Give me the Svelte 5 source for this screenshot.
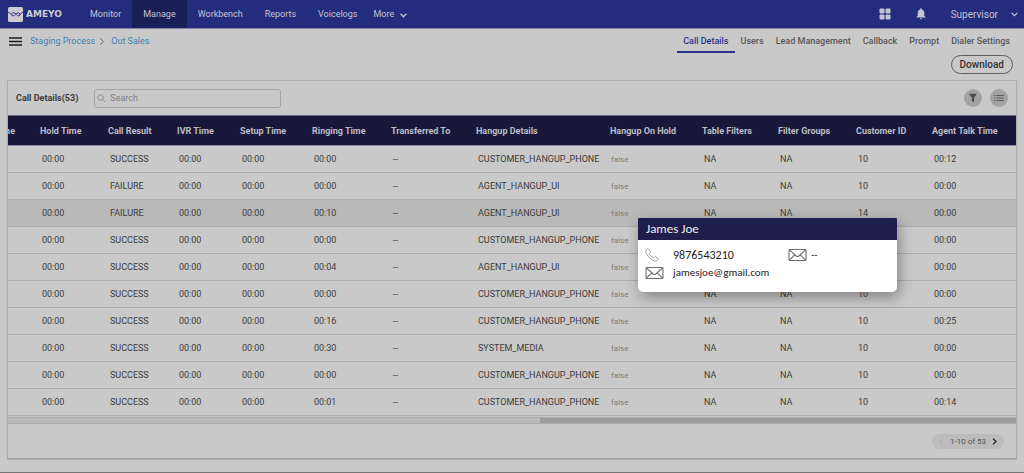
<script>
  let search = '';
  let activeTab = 'Call Details';

  const navItems = ['Monitor', 'Manage', 'Workbench', 'Reports', 'Voicelogs'];
  const tabs = ['Call Details', 'Users', 'Lead Management', 'Callback', 'Prompt', 'Dialer Settings'];

  const columns = [
    { label: 'Time', width: 24 },
    { label: 'Hold Time', width: 68 },
    { label: 'Call Result', width: 69 },
    { label: 'IVR Time', width: 63 },
    { label: 'Setup Time', width: 72 },
    { label: 'Ringing Time', width: 79 },
    { label: 'Transferred To', width: 85 },
    { label: 'Hangup Details', width: 134 },
    { label: 'Hangup On Hold', width: 92 },
    { label: 'Table Filters', width: 76 },
    { label: 'Filter Groups', width: 78 },
    { label: 'Customer ID', width: 76 },
    { label: 'Agent Talk Time', width: 92 }
  ];

  const calls = [
    { result: 'SUCCESS', ringing: '00:00', hangup: 'CUSTOMER_HANGUP_PHONE', customer: 10, talk: '00:12' },
    { result: 'FAILURE', ringing: '00:00', hangup: 'AGENT_HANGUP_UI', customer: 10, talk: '00:00' },
    { result: 'FAILURE', ringing: '00:10', hangup: 'AGENT_HANGUP_UI', customer: 14, talk: '00:00' },
    { result: 'SUCCESS', ringing: '00:00', hangup: 'CUSTOMER_HANGUP_PHONE', customer: 10, talk: '00:00' },
    { result: 'SUCCESS', ringing: '00:04', hangup: 'AGENT_HANGUP_UI', customer: 10, talk: '00:00' },
    { result: 'SUCCESS', ringing: '00:00', hangup: 'CUSTOMER_HANGUP_PHONE', customer: 10, talk: '00:00' },
    { result: 'SUCCESS', ringing: '00:16', hangup: 'CUSTOMER_HANGUP_PHONE', customer: 10, talk: '00:25' },
    { result: 'SUCCESS', ringing: '00:30', hangup: 'SYSTEM_MEDIA', customer: 10, talk: '00:00' },
    { result: 'SUCCESS', ringing: '00:00', hangup: 'CUSTOMER_HANGUP_PHONE', customer: 10, talk: '00:00' },
    { result: 'SUCCESS', ringing: '00:01', hangup: 'CUSTOMER_HANGUP_PHONE', customer: 10, talk: '00:14' }
  ];

  const selectedRow = 2;
</script>

{#snippet mail()}
  <svg class="mail" width="19" height="14" viewBox="0 0 19 14" fill="none" stroke="#6c6c6c" stroke-width="1.1" stroke-linejoin="round">
    <rect x="1" y="1.5" width="17" height="11" rx="0.8" />
    <path d="M1.4 1.9 8.2 8q1.3 1 2.6 0l6.8-6.1M1.4 12.1l5.4-5.3M17.6 12.1l-5.4-5.3" />
  </svg>
{/snippet}

<header class="topbar">
  <a class="logo" href="#home">
    <svg width="15" height="15" viewBox="0 0 15 15">
      <rect width="15" height="15" rx="1.5" fill="#cbcbd0" />
      <path d="M0 5.300C2.500 5.300 3.300 8.900 5.200 8.900 7.600 8.900 7.900 5.800 10.400 5.800c1.700 0 1.900 2.800.2 3C8.700 9 8.200 5.700 5.200 5.700c-1.800 0-2.100 2.800-.4 3.100M10.600 8.800c2 0 2-3.500 4.400-3.500" fill="none" stroke="#3a418a" stroke-width="1" />
    </svg>
    <span>AMEYO</span>
  </a>
  <nav>
    {#each navItems as item}
      <a href="#{item.toLowerCase()}" class:active={item === 'Manage'}>{item}</a>
    {/each}
    <button class="more">
      More
      <svg width="7" height="5" viewBox="0 0 7 5" fill="none" stroke="currentColor" stroke-width="1.4"><path d="M.6.8 3.500 3.700 6.400.8" /></svg>
    </button>
  </nav>
  <div class="account">
    <button aria-label="Apps">
      <svg width="12" height="12" viewBox="0 0 12 12" fill="currentColor">
        <rect x=".5" y=".5" width="5" height="5" rx="1" />
        <rect x="6.500" y=".5" width="5" height="5" rx="1" />
        <rect x=".5" y="6.500" width="5" height="5" rx="1" />
        <rect x="6.500" y="6.500" width="5" height="5" rx="1" />
      </svg>
    </button>
    <button aria-label="Notifications" class="bell">
      <svg width="10" height="12" viewBox="0 0 10 12" fill="currentColor">
        <path d="M5 .3c.5 0 .9.4.9.9v.3C7.500 1.900 8.300 3.200 8.300 4.800v3L9.500 9v.6h-9V9l1.200-1.200v-3c0-1.600.8-2.900 2.400-3.300v-.3c0-.5.4-.9.9-.9zM3.900 10.300h2.200a1.100 1.100 0 0 1-2.200 0z" />
      </svg>
    </button>
    <button class="user">
      <span>Supervisor</span>
      <svg width="7" height="5" viewBox="0 0 7 5" fill="none" stroke="currentColor" stroke-width="1.2"><path d="M.6.8 3.500 3.700 6.400.8" /></svg>
    </button>
  </div>
</header>

<main>
  <div class="subbar">
    <button class="menu" aria-label="Menu">
      <svg width="13" height="9" viewBox="0 0 13 9" stroke="#1c1c1c" stroke-width="1.600"><path d="M0 1h13M0 4.500h13M0 8h13" /></svg>
    </button>
    <a class="crumb" href="#staging">Staging Process</a>
    <svg class="sep" width="4" height="7" viewBox="0 0 4 7" fill="none" stroke="#666" stroke-width="1"><path d="M.5.5 3.300 3.500.5 6.500" /></svg>
    <a class="crumb" href="#out-sales">Out Sales</a>
    <div class="tabs">
      {#each tabs as tab}
        <button class:active={tab === activeTab} on:click={() => (activeTab = tab)}>{tab}</button>
      {/each}
    </div>
  </div>

  <div class="actions">
    <button class="download">Download</button>
  </div>

  <section class="panel">
    <div class="toolbar">
      <h1>Call Details(53)</h1>
      <label class="search">
        <svg width="9" height="9" viewBox="0 0 9 9" fill="none" stroke="#8c8c8c" stroke-width="1"><circle cx="3.500" cy="3.500" r="2.700" /><path d="m5.500 5.500 3 3" /></svg>
        <input type="text" placeholder="Search" aria-label="Search" bind:value={search} />
      </label>
      <div class="tools">
        <button aria-label="Filter">
          <svg width="10" height="10" viewBox="0 0 10 10" fill="#4c4c4c"><path d="M1 .8h8L6.100 4.800V9.300L3.900 8V4.800z" /></svg>
        </button>
        <button aria-label="Columns">
          <svg width="10" height="8" viewBox="0 0 10 8" stroke="#5c5c5c" stroke-width="1.100"><path d="M0 1.500h1.300M2.300 1.500H10M0 4h1.300M2.300 4H10M0 6.500h1.300M2.300 6.500H10" /></svg>
        </button>
      </div>
    </div>

    <div class="table-wrap">
      <table>
        <colgroup>
          {#each columns as col}
            <col style="width: {col.width}px" />
          {/each}
        </colgroup>
        <thead>
          <tr>
            {#each columns as col}
              <th><span>{col.label}</span></th>
            {/each}
          </tr>
        </thead>
        <tbody>
          {#each calls as call, i}
            <tr class:selected={i === selectedRow}>
              <td></td>
              <td>00:00</td>
              <td>{call.result}</td>
              <td>00:00</td>
              <td>00:00</td>
              <td>{call.ringing}</td>
              <td>--</td>
              <td>{call.hangup}</td>
              <td class="flag">false</td>
              <td>NA</td>
              <td>NA</td>
              <td>{call.customer}</td>
              <td>{call.talk}</td>
            </tr>
          {/each}
        </tbody>
      </table>
      <aside class="card">
        <h2>James Joe</h2>
        <div class="contact">
          <svg width="14" height="14" viewBox="0 0 14 14" fill="none" stroke="#8a8a8a" stroke-width="0.8" stroke-linejoin="round">
            <path d="M2.200.8.9 2.100C.2 3 .8 5.400 3.500 8.500s5.700 5 7.600 4.700l1.900-1.500c.4-.4.3-.8 0-1.100L10.700 8.900c-.4-.3-.8-.3-1.100 0l-1 .9C7.600 9.800 4.500 6.800 4.300 5.500l1-1c.4-.4.3-.8 0-1.100L3.500.9C3.100.4 2.600.4 2.200.8z" />
          </svg>
          <span>9876543210</span>
          {@render mail()}
          <span class="small">--</span>
          {@render mail()}
          <span class="small">jamesjoe@gmail.com</span>
        </div>
      </aside>
    </div>

    <div class="scroll-track"><div class="scroll-thumb"></div></div>

    <footer>
      <div class="pager">
        <button aria-label="Previous page" disabled>
          <svg width="5" height="7" viewBox="0 0 5 7" fill="none" stroke="#aaa" stroke-width="1"><path d="M4 .6 1 3.500 4 6.400" /></svg>
        </button>
        <span>1-10 of 53</span>
        <button aria-label="Next page">
          <svg width="5" height="7" viewBox="0 0 5 7" fill="none" stroke="#222" stroke-width="1.300"><path d="M1 .6 4 3.500 1 6.400" /></svg>
        </button>
      </div>
    </footer>
  </section>
</main>

<style>
  :global(body) {
    background: #c9c9c9;
    font-family: Roboto, 'Liberation Sans', sans-serif;
    font-size: 9px;
    color: #3c3c3c;
  }

  :global(#app) {
    box-sizing: border-box;
    min-height: 100vh;
    border-bottom: 1px solid #777;
  }

  button {
    padding: 0;
    border: 0;
    background: none;
    color: inherit;
    font: inherit;
    cursor: pointer;
  }

  a { color: inherit; text-decoration: none; }
  svg { display: block; flex: none; }

  .topbar {
    display: flex;
    height: 28px;
    background: #242c7d;
    border-bottom: 1px solid #8586ae;
    color: #c3c4d2;
  }

  .logo {
    display: flex;
    align-items: center;
    gap: 3px;
    width: 71px;
    padding-left: 8px;
    font-family: 'DejaVu Sans', sans-serif;
    font-size: 9px;
    font-weight: 700;
    color: #cbcbd0;
  }

  nav { display: flex; }

  nav a, .more {
    display: flex;
    align-items: center;
    padding: 0 11px;
  }

  nav a.active { background: #191e57; }
  .more { gap: 6px; padding: 0 5px; }
  .more svg { margin-top: 3px; }

  .account {
    display: flex;
    align-items: center;
    gap: 25px;
    margin-left: auto;
    padding-right: 6px;
  }

  .user {
    display: flex;
    align-items: center;
    gap: 13px;
    font-size: 10px;
  }

  main { padding: 0 7px; }

  .subbar {
    display: flex;
    align-items: center;
    height: 24px;
  }

  .menu { margin: 0 8px 0 2px; }
  .crumb { color: #4080b4; }
  .sep { margin: 0 7px 0 5px; }

  .tabs {
    display: flex;
    height: 24px;
    margin-left: auto;
    padding-right: 1px;
  }

  .tabs button {
    padding: 2px 6px 0;
    border-bottom: 2px solid transparent;
    font-weight: 500;
    color: #595959;
  }

  .tabs button.active {
    color: #2d328c;
    border-color: #2d328c;
  }

  .actions {
    display: flex;
    justify-content: flex-end;
    padding: 2px 4px 6px 0;
  }

  .download {
    height: 19px;
    padding: 0 8px;
    border: 1px solid #5f5f5f;
    border-radius: 10px;
    font-weight: 500;
    font-size: 10px;
    color: #333;
  }

  .panel {
    border: 1px solid #adadad;
    border-bottom-color: #9e9e9e;
    box-shadow: 0 1px 1px rgba(0, 0, 0, 0.12);
  }

  .toolbar {
    display: flex;
    align-items: center;
    gap: 16px;
    height: 34px;
    padding: 0 8px;
  }

  h1 { margin: 0; font-size: 9px; font-weight: 700; }

  .search {
    display: flex;
    align-items: center;
    gap: 4px;
    box-sizing: border-box;
    width: 187px;
    height: 19px;
    padding: 0 2px;
    border: 1px solid #a5a5a5;
    border-radius: 3px;
  }

  .search input {
    flex: 1;
    min-width: 0;
    padding: 0;
    border: 0;
    outline: 0;
    background: none;
    color: inherit;
    font: inherit;
  }

  .search input::placeholder { color: #808080; }

  .tools { display: flex; gap: 8px; margin-left: auto; }

  .tools button {
    display: flex;
    align-items: center;
    justify-content: center;
    width: 18px;
    height: 18px;
    border-radius: 50%;
    background: #a3a3a3;
  }

  .table-wrap { position: relative; }

  table {
    width: 100%;
    table-layout: fixed;
    border-collapse: separate;
    border-spacing: 0;
  }

  th, td {
    box-sizing: border-box;
    padding: 0 0 0 8px;
    text-align: left;
    white-space: nowrap;
  }

  th {
    height: 31px;
    background: #19183b;
    border-top: 1px solid #66667c;
    border-bottom: 1px solid #8a8a99;
    color: #bcbcc4;
    font-weight: 700;
  }

  /* scrolled column, only its tail is in view */
  th:first-child { padding: 0; overflow: hidden; }
  th:first-child span {
    display: flex;
    justify-content: flex-end;
    width: 7px;
  }

  td {
    height: 27px;
    padding-left: 10px;
    border-bottom: 1px solid #acacac;
  }

  .selected td { background: #b9b9b9; }
  td.flag { padding-left: 9px; font-size: 8px; color: #7c7c7c; }

  .card {
    position: absolute;
    top: 103px;
    left: 62.5%;
    width: 259px;
    overflow: hidden;
    border-radius: 1px 1px 5px 5px;
    background: #fff;
    box-shadow: 2px 5px 14px rgba(0, 0, 0, 0.35);
    font-family: Carlito, Lato, sans-serif;
    font-size: 12px;
    color: #222;
  }

  h2 {
    margin: 0;
    padding: 0 8px;
    background: #1f1f4d;
    color: #eee;
    font-size: 13px;
    font-weight: 400;
    line-height: 22px;
  }

  .contact {
    display: grid;
    grid-template-columns: 28px 115px 23px 1fr;
    align-items: center;
    padding: 6px 7px 10px;
    line-height: 18px;
  }

  .contact .small { font-size: 11px; }

  .scroll-track {
    height: 5px;
    margin-top: 1px;
    border-top: 1px solid #aaa;
    border-bottom: 1px solid #aaa;
    background: #bababa;
  }

  .scroll-thumb {
    width: 47.2%;
    height: 5px;
    margin-left: auto;
    background: #9e9e9e;
  }

  footer {
    display: flex;
    align-items: center;
    justify-content: flex-end;
    height: 34px;
    padding-right: 12px;
  }

  .pager {
    display: flex;
    align-items: center;
    gap: 6px;
    height: 15px;
    padding: 0 7px;
    border-radius: 8px;
    background: #bcbcbc;
    font-size: 8px;
    color: #555;
  }
</style>
